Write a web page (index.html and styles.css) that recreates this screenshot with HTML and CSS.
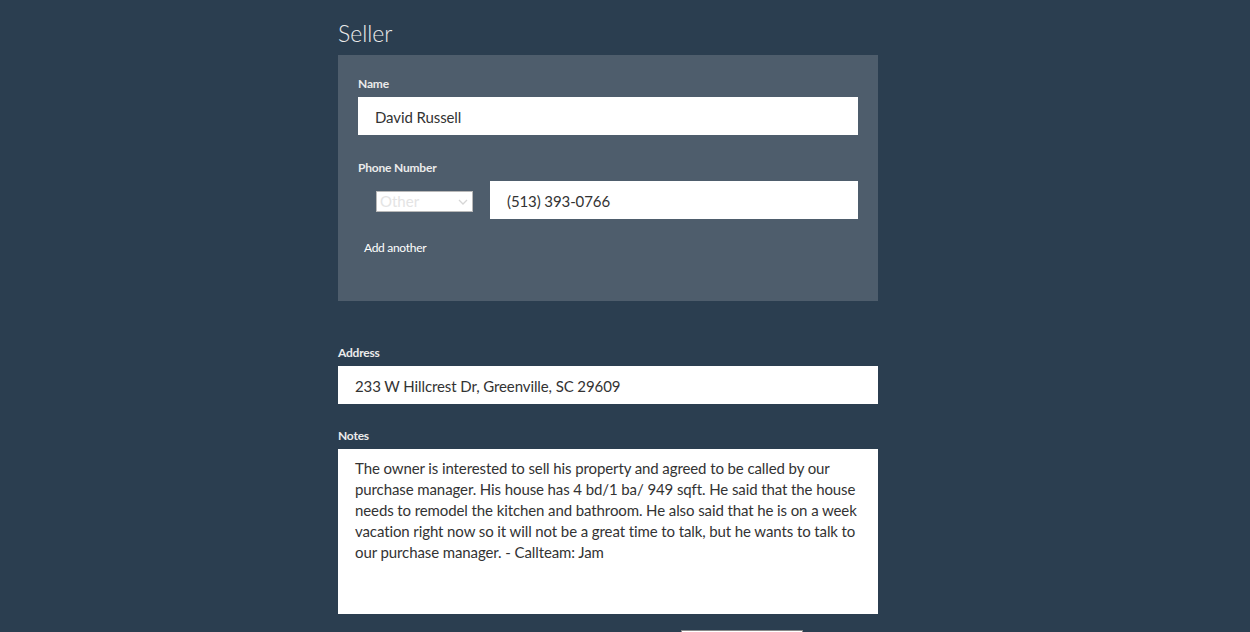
FILE: index.html
```html
<!DOCTYPE html>
<html>
<head>
<meta charset="utf-8">
<link rel="stylesheet" href="styles.css">
</head>
<body>
<div class="page">
  <h2 class="title">Seller</h2>
  <div class="panel">
    <label class="lbl">Name</label>
    <div class="field">David Russell</div>
    <label class="lbl lbl-phone">Phone Number</label>
    <div class="phone-row">
      <span class="select-wrap">
        <select class="select"><option>Other</option></select>
        <svg class="chev" width="10" height="6" viewBox="0 0 10 6"><path d="M1 1l4 4 4-4" fill="none" stroke="#d6d6d6" stroke-width="1.3"/></svg>
      </span>
      <div class="field phone">(513) 393-0766</div>
    </div>
    <a class="add">Add another</a>
  </div>
  <label class="lbl lbl-address">Address</label>
  <div class="field">233 W Hillcrest Dr, Greenville, SC 29609</div>
  <label class="lbl lbl-notes">Notes</label>
  <div class="field notes">The owner is interested to sell his property and agreed to be called by our purchase manager. His house has 4 bd/1 ba/ 949 sqft. He said that the house needs to remodel the kitchen and bathroom. He also said that he is on a week vacation right now so it will not be a great time to talk, but he wants to talk to our purchase manager. - Callteam: Jam</div>
  <div class="actions"><div class="btn"></div></div>
</div>
</body>
</html>
```
FILE: styles.css
```css
html, body {
  margin: 0;
  padding: 0;
  background: #2b3e50;
  font-family: Lato, "Open Sans", sans-serif;
  color: #ebebeb;
}
.page {
  width: 540px;
  margin-left: 338px;
  padding-top: 20px;
}
.title {
  margin: 0 0 8px 0;
  font-size: 23px;
  font-weight: 300;
  line-height: 27px;
  color: #ebebeb;
}
.panel {
  background: #4e5d6c;
  padding: 20px;
  height: 206px;
  display: flex;
  flex-direction: column;
}
.lbl {
  display: block;
  font-size: 12px;
  font-weight: 700;
  line-height: 17px;
  margin-bottom: 5px;
  letter-spacing: -0.2px;
}
.lbl-phone { margin-top: 24px; }
.lbl-address { margin-top: 43px; }
.lbl-notes { margin-top: 23px; }
.field {
  background: #fff;
  color: #333;
  height: 38px;
  box-sizing: border-box;
  padding: 2px 16px 0 17px;
  font-size: 15px;
  line-height: 36px;
  letter-spacing: -0.1px;
}
.phone-row {
  display: flex;
  align-items: center;
}
.select-wrap {
  position: relative;
  margin-left: 18px;
  margin-right: 17px;
  margin-top: 2px;
  display: block;
  width: 97px;
  height: 21px;
}
.select {
  appearance: none;
  -webkit-appearance: none;
  width: 97px;
  height: 21px;
  box-sizing: border-box;
  border: 1px solid #b8b8b8;
  background: #fff;
  color: #e4e4e4;
  font-family: Lato, sans-serif;
  font-size: 15px;
  padding: 0 0 0 3px;
  margin: 0;
  border-radius: 0;
  outline: none;
}
.chev {
  position: absolute;
  right: 5px;
  top: 8px;
}
.phone { flex: 1; }
.add {
  display: block;
  margin: 20px 0 0 6px;
  font-size: 12px;
  line-height: 17px;
  color: #fff;
  letter-spacing: -0.3px;
}
.notes {
  height: 165px;
  line-height: 21px;
  padding-top: 9px;
  padding-right: 15px;
}
.actions {
  display: flex;
  padding-top: 16px;
  padding-left: 343px;
}
.btn {
  width: 120px;
  height: 40px;
  background: #fff;
  border: 1px solid #8a8a8a;
}
```
